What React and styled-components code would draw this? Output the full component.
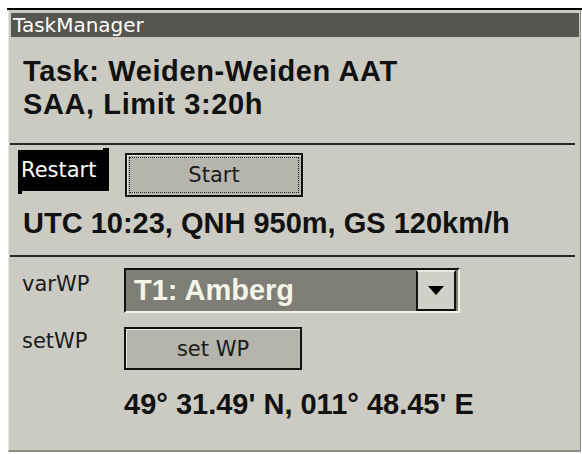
import React from 'react';
import styled, { createGlobalStyle } from 'styled-components';

const GlobalStyle = createGlobalStyle`
  html, body {
    margin: 0;
    padding: 0;
    background: #fff;
  }
  body {
    width: 582px;
    height: 454px;
    overflow: hidden;
    font-family: "DejaVu Sans", Tahoma, sans-serif;
  }
`;

const Screen = styled.div`
  padding-top: 8px;
`;

const TopRule = styled.div`
  height: 2px;
  margin-left: 7px;
  background: #000;
`;

const Window = styled.div`
  box-sizing: border-box;
  height: 442px;
  margin: 0 1px 0 8px;
  padding: 3px 1px 0 2px;
  background: #cbcbc3;
  border-left: 1px solid #e6e6de;
  border-right: 1px solid #8c8c86;
  border-bottom: 2px solid #8c8c86;
  display: flex;
  flex-direction: column;
`;

const TitleBar = styled.div`
  height: 24px;
  padding-left: 2px;
  background: #55564f;
  color: #fff;
  font-size: 20px;
  line-height: 24px;
`;

const Rule = styled.div`
  height: 2px;
  margin: 0 4px 0 -1px;
  background: #262624;
`;

const BigText = styled.div`
  font-family: "Liberation Sans", Arial, sans-serif;
  font-weight: bold;
  font-size: 29px;
  line-height: 33px;
  color: #111;
  white-space: nowrap;
  letter-spacing: ${p => p.$track || 0}px;
`;

const TaskInfo = styled.div`
  height: 106px;
  box-sizing: border-box;
  padding: 18px 0 0 12px;
`;

const StartBlock = styled.div`
  height: 110px;
  box-sizing: border-box;
  padding: 5px 0 0 7px;
`;

const StartRow = styled.div`
  display: flex;
  align-items: flex-start;
  gap: 16px;
`;

const Tab = styled.div`
  position: relative;
  width: 91px;
  height: 41px;
  box-sizing: border-box;
  padding-left: 3px;
  background: #000;
  color: #fff;
  font-size: 21px;
  line-height: 40px;

  /* little notches at the corners of the tab */
  &::before {
    content: '';
    position: absolute;
    right: 0;
    top: -2px;
    width: 6px;
    height: 2px;
    background: #000;
  }
  &::after {
    content: '';
    position: absolute;
    left: 0;
    bottom: -3px;
    width: 4px;
    height: 3px;
    background: #000;
  }
`;

const Button = styled.div`
  box-sizing: border-box;
  width: 178px;
  height: ${p => p.$tall ? 44 : 43}px;
  margin-top: ${p => p.$offset || 0}px;
  border: 2px solid #111;
  background: ${p => p.$fill || '#b6b6ae'};
  box-shadow: inset 1px 1px 0 #e8e8e0;
  color: #1a1a1a;
  font-size: 21px;
  display: flex;
  align-items: center;
  justify-content: center;
  position: relative;
`;

const FocusRing = styled.div`
  position: absolute;
  inset: 2px;
  border: 1px dotted #222;
`;

const Clock = styled(BigText)`
  margin: 10px 0 0 5px;
`;

const WaypointBlock = styled.div`
  flex: 1;
  padding: 11px 0 0 11px;
  display: grid;
  grid-template-columns: 102px 336px;
  align-content: start;
  align-items: start;
  row-gap: 14px;
`;

const Label = styled.div`
  font-size: 21px;
  line-height: 24px;
  color: #1a1a1a;
  padding-top: ${p => p.$pad || 0}px;
`;

const Select = styled.div`
  box-sizing: border-box;
  height: 45px;
  display: flex;
  border-top: 2px solid #111;
  border-left: 2px solid #111;
  border-right: 2px solid #f2f2ea;
  border-bottom: 2px solid #f2f2ea;
  background: #7e7e77;
`;

const SelectValue = styled(BigText)`
  flex: 1;
  padding-left: 8px;
  color: #f4f4e8;
  line-height: 41px;
`;

const SelectArrow = styled.div`
  box-sizing: border-box;
  width: 40px;
  margin: 0 2px 0 0;
  background: #d0d0c8;
  border: 2px solid #111;
  border-top-color: #e8e8e0;
  border-left: 2px solid #111;
  display: flex;
  align-items: center;
  justify-content: center;
`;

const Coords = styled(BigText)`
  grid-column: 2;
  margin-top: 4px;
`;

export default function App() {
  return (
    <Screen>
      <GlobalStyle />
      <TopRule />
      <Window>
        <TitleBar>TaskManager</TitleBar>
        <TaskInfo>
          <BigText $track={0.6}>Task: Weiden-Weiden AAT</BigText>
          <BigText $track={0.6}>SAA, Limit 3:20h</BigText>
        </TaskInfo>
        <Rule />
        <StartBlock>
          <StartRow>
            <Tab>Restart</Tab>
            <Button $tall $offset={3}>
              <FocusRing />
              Start
            </Button>
          </StartRow>
          <Clock>UTC 10:23, QNH 950m, GS 120km/h</Clock>
        </StartBlock>
        <Rule />
        <WaypointBlock>
          <Label $pad={4}>varWP</Label>
          <Select>
            <SelectValue>T1: Amberg</SelectValue>
            <SelectArrow>
              <svg width="16" height="9" viewBox="0 0 16 9">
                <path d="M0 0H16L8 9Z" fill="#000" />
              </svg>
            </SelectArrow>
          </Select>
          <Label $pad={2}>setWP</Label>
          <Button $fill="#b4b4ac">set WP</Button>
          <Coords>49° 31.49' N, 011° 48.45' E</Coords>
        </WaypointBlock>
      </Window>
    </Screen>
  );
}
